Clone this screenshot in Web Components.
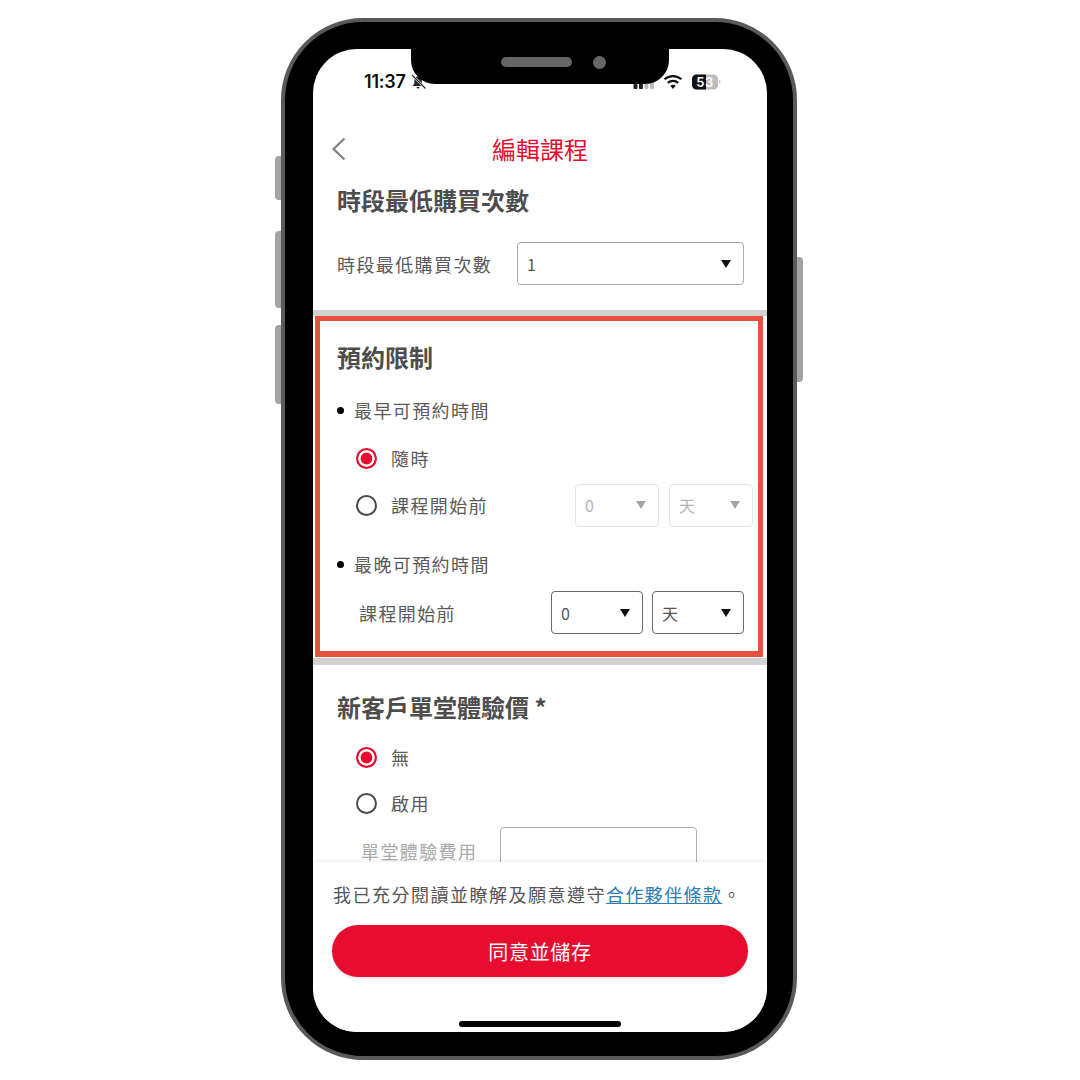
<!DOCTYPE html>
<html lang="zh-Hant">
<head>
<meta charset="utf-8">
<title>編輯課程</title>
<style>
  html, body { margin: 0; height: 100%; background: #fff; }
  body {
    padding: 18px 0 0 281px;
    box-sizing: border-box;
    font-family: "Noto Sans CJK TC", "Liberation Sans", sans-serif;
    color: #555;
  }
</style>
</head>
<body>
<phone-frame>
  <status-bar></status-bar>
  <nav-header>編輯課程</nav-header>
  <main-scroll>
    <form-section heading="時段最低購買次數" style="--pad: 10px 23px 23px 24px">
      <form-row>
        <span style="width:180px">時段最低購買次數</span>
        <select-box value="1" style="width:227px"></select-box>
      </form-row>
    </form-section>
    <section-divider></section-divider>
    <form-section highlight heading="預約限制">
      <bullet-label style="margin-top:22px">最早可預約時間</bullet-label>
      <radio-row checked style="margin-top:10.5px">隨時</radio-row>
      <radio-row>
        課程開始前
        <select-box slot="end" disabled value="0" style="width:84px"></select-box>
        <select-box slot="end" disabled value="天" style="width:84px;margin-left:10px"></select-box>
      </radio-row>
      <bullet-label style="margin-top:21.5px">最晚可預約時間</bullet-label>
      <form-row style="margin-top:11px;padding:0 0 0 22px">
        <span style="width:192px">課程開始前</span>
        <select-box strong value="0" style="width:92px"></select-box>
        <select-box strong value="天" style="width:92px;margin-left:9px"></select-box>
      </form-row>
    </form-section>
    <section-divider style="margin-top:1px;height:7px"></section-divider>
    <form-section heading="新客戶單堂體驗價 *" style="--pad: 25px 23px 0 24px">
      <radio-row checked style="margin-top:10px;height:46px">無</radio-row>
      <radio-row style="height:46px">啟用</radio-row>
      <form-row style="margin-top:1px;padding-left:24px;color:#aaa">
        <span style="width:139px">單堂體驗費用</span>
        <text-input></text-input>
      </form-row>
    </form-section>
  </main-scroll>
  <agree-footer></agree-footer>
</phone-frame>

<script>
function define(name, css, html, extra) {
  customElements.define(name, class extends HTMLElement {
    constructor() {
      super();
      this.attachShadow({ mode: 'open' });
    }
    connectedCallback() {
      const body = typeof html === 'function' ? html(this) : html;
      this.shadowRoot.innerHTML = `<style>${css}</style>${body}`;
    }
  });
}

define('phone-frame', `
  :host {
    display: block;
    position: relative;
    width: 516px;
    height: 1042px;
    box-sizing: border-box;
    background: #000;
    border: 4px solid #5a5a5a;
    border-radius: 82px;
    padding: 27px 26px 24px 28px;
  }
  .screen {
    position: relative;
    width: 454px;
    height: 983px;
    background: #fff;
    border-radius: 44px;
    overflow: hidden;
    display: flex;
    flex-direction: column;
  }
  .notch {
    position: absolute;
    left: 98px;
    top: 0;
    width: 258px;
    height: 35px;
    background: #000;
    border-radius: 0 0 24px 24px;
    z-index: 5;
  }
  .speaker {
    position: absolute;
    left: 90px;
    top: 8px;
    width: 71px;
    height: 10px;
    border-radius: 5px;
    background: #666;
  }
  .camera {
    position: absolute;
    left: 182px;
    top: 6.5px;
    width: 13px;
    height: 13px;
    border-radius: 50%;
    background: #666;
  }
  .btn {
    position: absolute;
    background: #a3a3a3;
    width: 6px;
  }
  .l { left: -10px; border-radius: 4px 0 0 4px; }
  .r { right: -10px; border-radius: 0 4px 4px 0; }
`, `
  <div class="btn l" style="top:134px;height:44px"></div>
  <div class="btn l" style="top:209px;height:77px"></div>
  <div class="btn l" style="top:303px;height:79px"></div>
  <div class="btn r" style="top:235px;height:125px"></div>
  <div class="screen">
    <div class="notch"><div class="speaker"></div><div class="camera"></div></div>
    <slot></slot>
  </div>
`);

define('status-bar', `
  :host { display: block; flex: none; height: 76px; position: relative; }
  .row {
    display: flex;
    align-items: center;
    height: 20px;
    padding: 23px 0 0 51px;
  }
  .time {
    font: 600 18px/20px "Inter", "Liberation Sans", sans-serif;
    color: #111;
    letter-spacing: -0.2px;
  }
  svg { display: block; flex: none; }
`, `
  <div class="row">
    <span class="time">11:37</span>
    <svg style="margin-left:4px" width="17" height="16" viewBox="0 0 17 16">
      <path d="M8 2.5c-2.4 0-3.6 1.7-3.6 4v3L2.6 12h11l-1.8-2.5v-3c0-2.300-1.400-4-3.800-4z" fill="#222"/>
      <path d="M6.500 13h3a1.500 1.500 0 0 1-3 0z" fill="#222"/>
      <path d="M2.500 1.500 15.500 14.500" stroke="#fff" stroke-width="2.400"/>
      <path d="M2 1 15.500 14.500" stroke="#222" stroke-width="1.100"/>
    </svg>
    <svg style="margin-left:206px" width="22" height="16" viewBox="0 0 22 16">
      <rect x="0.500" y="10" width="4" height="5" rx="1" fill="#222"/>
      <rect x="6" y="8" width="4" height="7" rx="1" fill="#222"/>
      <rect x="11.500" y="5" width="4" height="10" rx="1" fill="#bbb"/>
      <rect x="17" y="2" width="4" height="13" rx="1" fill="#bbb"/>
    </svg>
    <svg style="margin-left:8px" width="20" height="16" viewBox="0 0 20 16">
      <path d="M10 15 7.300 11.800a4.200 4.200 0 0 1 5.400 0z" fill="#111"/>
      <path d="M4.800 8.900a7.900 7.900 0 0 1 10.400 0" fill="none" stroke="#111" stroke-width="2.200"/>
      <path d="M1.500 5.300a12.800 12.800 0 0 1 17 0" fill="none" stroke="#111" stroke-width="2.200"/>
    </svg>
    <svg style="margin-left:9px" width="29" height="16" viewBox="0 0 29 16">
      <rect x="0" y="0.500" width="26" height="15" rx="4.500" fill="#bdbdbd"/>
      <path d="M4.500.5H14v15H4.500A4.500 4.500 0 0 1 0 11V5A4.500 4.500 0 0 1 4.500.5z" fill="#111"/>
      <path d="M27 6v4c1-.3 1.500-1 1.500-2S28 6.300 27 6z" fill="#ccc"/>
      <text x="13" y="12.800" text-anchor="middle" font-family="Inter, Liberation Sans, sans-serif" font-size="13" font-weight="600" fill="#fff" letter-spacing="0.500">53</text>
    </svg>
  </div>
`);

define('nav-header', `
  :host {
    display: flex;
    flex: none;
    height: 48px;
    align-items: center;
    justify-content: center;
    position: relative;
    color: #e60d2e;
    font-size: 24px;
    line-height: 48px;
  }
  svg { position: absolute; left: 18px; top: 12px; }
`, `
  <svg width="16" height="24" viewBox="0 0 16 24">
    <path d="M13.500 1.500 2.500 12l11 10.500" fill="none" stroke="#808080" stroke-width="2.200"/>
  </svg>
  <slot></slot>
`);

define('main-scroll', `
  :host {
    display: block;
    flex: 1;
    min-height: 0;
    overflow: hidden;
  }
`, `<slot></slot>`);

define('section-divider', `
  :host { display: block; height: 6px; background: #d2d2d2; }
`, ``);

define('form-section', `
  :host {
    display: block;
    padding: var(--pad, 0 24px);
    font-size: 18px;
    letter-spacing: 1.400px;
    color: #5a5a5a;
  }
  :host([highlight]) {
    margin: 0 4px 0 2px;
    border: 5px solid #e8503f;
    border-bottom-width: 6px;
    padding: 19px 5px 15px 17px;
  }
  h2 {
    margin: 0 0 23px;
    font-size: 24px;
    line-height: 34px;
    font-weight: 700;
    letter-spacing: 0;
    color: #4d4d4d;
  }
  :host([highlight]) h2, .flat { margin-bottom: 0; }
`, (el) => `
  <h2 class="${el.getAttribute('heading').includes('*') ? 'flat' : ''}">${el.getAttribute('heading')}</h2>
  <slot></slot>
`);

define('form-row', `
  :host { display: flex; align-items: center; height: 47px; }
`, `<slot></slot>`);

define('bullet-label', `
  :host {
    display: flex;
    align-items: center;
    height: 28px;
    line-height: 28px;
  }
  i {
    width: 7px;
    height: 7px;
    border-radius: 50%;
    background: #000;
    margin-right: 10px;
  }
`, `<i></i><slot></slot>`);

define('radio-row', `
  :host {
    display: flex;
    align-items: center;
    height: 47px;
    padding-left: 19px;
  }
  .dot {
    box-sizing: border-box;
    width: 21px;
    height: 21px;
    border-radius: 50%;
    border: 2.400px solid #4a4a4a;
    margin-right: 14px;
    flex: none;
  }
  :host([checked]) .dot {
    border-color: #e60d2e;
    background: #e60d2e;
    box-shadow: inset 0 0 0 2.600px #fff;
  }
  .end { margin-left: auto; display: flex; margin-right: 0; padding-right: 0; }
`, `
  <span class="dot"></span>
  <slot></slot>
  <span class="end"><slot name="end"></slot></span>
`);

define('select-box', `
  :host {
    display: flex;
    flex: none;
    align-items: center;
    justify-content: space-between;
    box-sizing: border-box;
    height: 43px;
    padding: 0 12px 0 9px;
    border: 1.500px solid #a9a9a9;
    border-radius: 4px;
    font-size: 16px;
    letter-spacing: 0;
    color: #555;
    font-family: "Noto Sans CJK TC", "Liberation Sans", sans-serif;
    background: #fff;
  }
  :host([strong]) { border-color: #6a6a6a; }
  :host([disabled]) { border-color: #e6e6e6; color: #b5b5b5; }
  i {
    width: 0;
    height: 0;
    border-left: 5px solid transparent;
    border-right: 5px solid transparent;
    border-top: 8px solid #111;
  }
  :host([disabled]) i { border-top-color: #a8a8a8; }
`, (el) => `<span>${el.getAttribute('value')}</span><i></i>`);

define('text-input', `
  :host {
    display: block;
    box-sizing: border-box;
    width: 197px;
    height: 47px;
    border: 1.500px solid #b0b0b0;
    border-radius: 4px;
    background: #fff;
  }
`, ``);

define('agree-footer', `
  :host {
    display: block;
    flex: none;
    height: 170px;
    box-sizing: border-box;
    padding-top: 18px;
    background: #fff;
    box-shadow: 0 -1px 4px rgba(0,0,0,.09);
    position: relative;
    color: #555;
  }
  p {
    margin: 0 0 0 20px;
    font-size: 18px;
    line-height: 28px;
    letter-spacing: 1.500px;
    white-space: nowrap;
  }
  a { color: #2c7db3; text-decoration: underline; letter-spacing: 1.400px; }
  .cta {
    margin: 17px 19px 0 19px;
    height: 52px;
    border-radius: 26px;
    background: #e60d2e;
    color: #fff;
    font-size: 20px;
    letter-spacing: 0.700px;
    display: flex;
    align-items: center;
    justify-content: center;
    box-shadow: 0 1px 3px rgba(0,0,0,.15);
  }
  .home {
    width: 162px;
    height: 6px;
    border-radius: 3px;
    background: #000;
    margin: 44px auto 0;
  }
`, `
  <p>我已充分閱讀並瞭解及願意遵守<a href="#">合作夥伴條款</a>。</p>
  <div class="cta">同意並儲存</div>
  <div class="home"></div>
`);
</script>
</body>
</html>
